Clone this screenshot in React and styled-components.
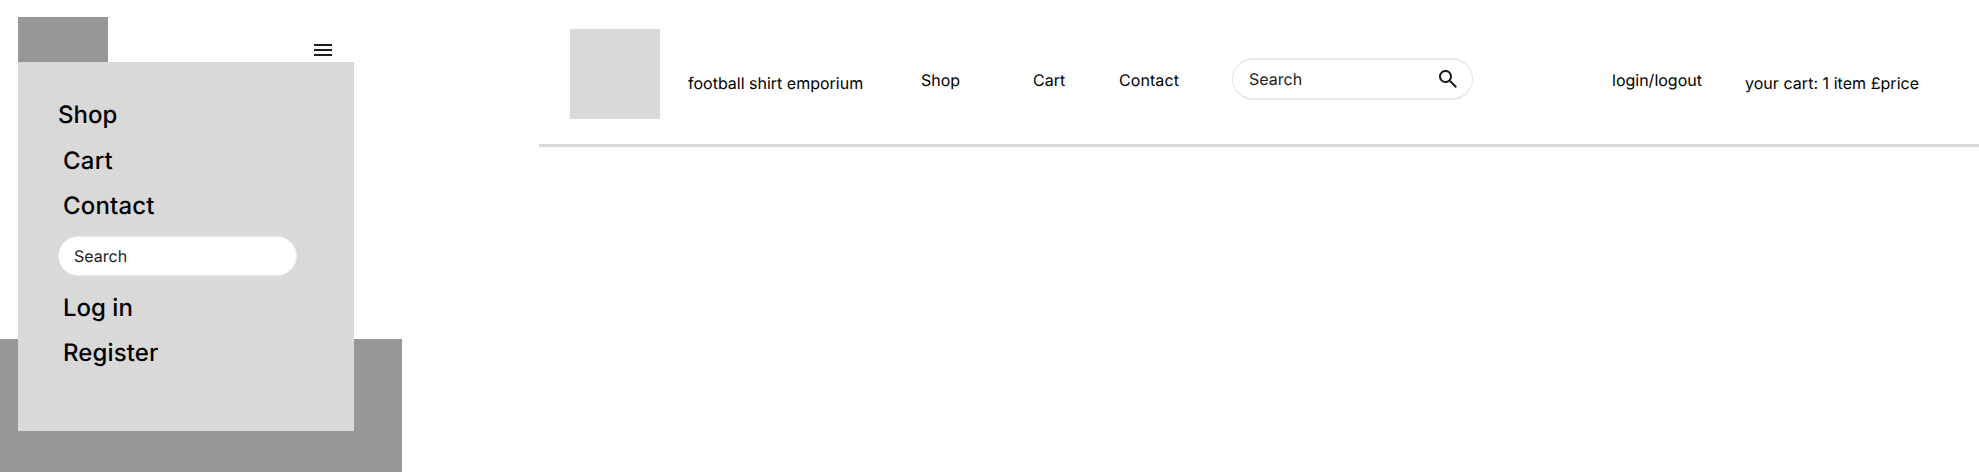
import React from "react";
import styled, { createGlobalStyle } from "styled-components";

const GlobalStyle = createGlobalStyle`
  * { box-sizing: border-box; }
  body {
    margin: 0;
    background: #fff;
    color: #000;
    font-family: Inter, "Liberation Sans", sans-serif;
    font-size: 16px;
    line-height: 24px;
    text-rendering: geometricPrecision;
    overflow: hidden;
  }
`;

const Page = styled.div`
  display: flex;
  gap: 137px;
  height: 472px;
`;

const Mobile = styled.section`
  position: relative;
  display: flex;
  flex-direction: column;
  justify-content: space-between;
  width: 402px;
  height: 472px;
`;

const MobileHeader = styled.header`
  display: flex;
  justify-content: space-between;
  padding: 17px 67px 0 18px;
`;

const Logo = styled.div`
  flex: none;
  width: 90px;
  height: 90px;
  background: ${(p) => p.$color};
`;

const MenuButton = styled.button`
  width: 24px;
  height: 24px;
  margin-top: 21px;
  padding: 0;
  border: 0;
  background: none;
  svg { display: block; }
`;

const MobileHero = styled.div`
  height: 133px;
  background: #999795;
`;

const MenuPanel = styled.nav`
  position: absolute;
  top: 62px;
  left: 18px;
  display: flex;
  flex-direction: column;
  align-items: flex-start;
  width: 336px;
  height: 369px;
  padding: 30px 40px 0;
  background: #d9d9d9;
`;

const MenuLink = styled.a`
  margin-left: ${(p) => (p.$indent ? 5 : 0)}px;
  font-size: 24px;
  font-weight: 500;
  letter-spacing: ${(p) => p.$tracking || 0}px;
  line-height: ${(p) => p.$height || 45}px;
`;

const SearchField = styled.div`
  flex: none;
  display: flex;
  align-items: center;
  justify-content: space-between;
  width: ${(p) => p.$width}px;
  height: ${(p) => p.$height}px;
  margin: ${(p) => p.$margin};
  padding: 0 12px 0 ${(p) => p.$inset}px;
  background: #fff;
  border: solid ${(p) => p.$borderColor};
  border-width: ${(p) => p.$borderWidth};
  border-radius: 21px;
  color: #1e1e1e;
`;

const SearchIcon = styled.svg`
  display: block;
  fill: #1d1b20;
`;

const Desktop = styled.header`
  display: flex;
  align-items: flex-start;
  width: 1440px;
  height: 147px;
  padding: 29px 0 0 31px;
  border-bottom: 3px solid #d9d9d9;
`;

const Label = styled.span`
  flex: none;
  width: ${(p) => p.$width}px;
  margin-top: ${(p) => (p.$low ? 42 : 39)}px;
  margin-left: ${(p) => p.$gap || 0}px;
  letter-spacing: ${(p) => p.$tracking || 0}px;
  white-space: nowrap;
`;

export default function App() {
  return (
    <>
      <GlobalStyle />
      <Page>
        <Mobile>
          <MobileHeader>
            <Logo $color="#999795" />
            <MenuButton aria-label="Menu">
              <svg width="24" height="24" viewBox="0 0 24 24" fill="#1d1b20">
                <path d="M3 18V16H21V18H3ZM3 13V11H21V13H3ZM3 8V6H21V8H3Z" />
              </svg>
            </MenuButton>
          </MobileHeader>
          <MobileHero />
          <MenuPanel>
            <MenuLink $height={46}>Shop</MenuLink>
            <MenuLink $indent $height={46} $tracking={0.2}>Cart</MenuLink>
            <MenuLink $indent $height={44} $tracking={0.15}>Contact</MenuLink>
            <SearchField $inset={15} $width={239} $height={40} $margin="8px 0 9px" $borderWidth="1px" $borderColor="#ececec">
              Search
            </SearchField>
            <MenuLink $indent>Log in</MenuLink>
            <MenuLink $indent $tracking={0.12}>Register</MenuLink>
          </MenuPanel>
        </Mobile>
        <Desktop>
          <Logo $color="#d9d9d9" />
          <Label $low $gap={28} $width={233}>football shirt emporium</Label>
          <Label $width={112}>Shop</Label>
          <Label $width={86}>Cart</Label>
          <Label $width={113} $tracking={0.08}>Contact</Label>
          <SearchField $inset={16} $width={241} $height={42} $margin="29px 0 0" $borderWidth="2px 1px" $borderColor="#e8e8e8">
            Search
            <SearchIcon width="24" height="24" viewBox="0 0 24 24">
              <path d="M19.6 21L13.3 14.7C12.8 15.1 12.225 15.417 11.575 15.65C10.925 15.883 10.233 16 9.5 16C7.683 16 6.146 15.371 4.888 14.113C3.629 12.854 3 11.317 3 9.5C3 7.683 3.629 6.146 4.888 4.888C6.146 3.629 7.683 3 9.5 3C11.317 3 12.854 3.629 14.113 4.888C15.371 6.146 16 7.683 16 9.5C16 10.233 15.883 10.925 15.65 11.575C15.417 12.225 15.1 12.8 14.7 13.3L21 19.6L19.6 21ZM9.5 14C10.75 14 11.813 13.563 12.688 12.688C13.563 11.813 14 10.75 14 9.5C14 8.25 13.563 7.188 12.688 6.313C11.813 5.438 10.75 5 9.5 5C8.25 5 7.188 5.438 6.313 6.313C5.438 7.188 5 8.25 5 9.5C5 10.75 5.438 11.813 6.313 12.688C7.188 13.563 8.25 14 9.5 14Z" />
            </SearchIcon>
          </SearchField>
          <Label $gap={139} $width={133}>login/logout</Label>
          <Label $low $width={180} $tracking={0.04}>your cart: 1 item £price</Label>
        </Desktop>
      </Page>
    </>
  );
}
